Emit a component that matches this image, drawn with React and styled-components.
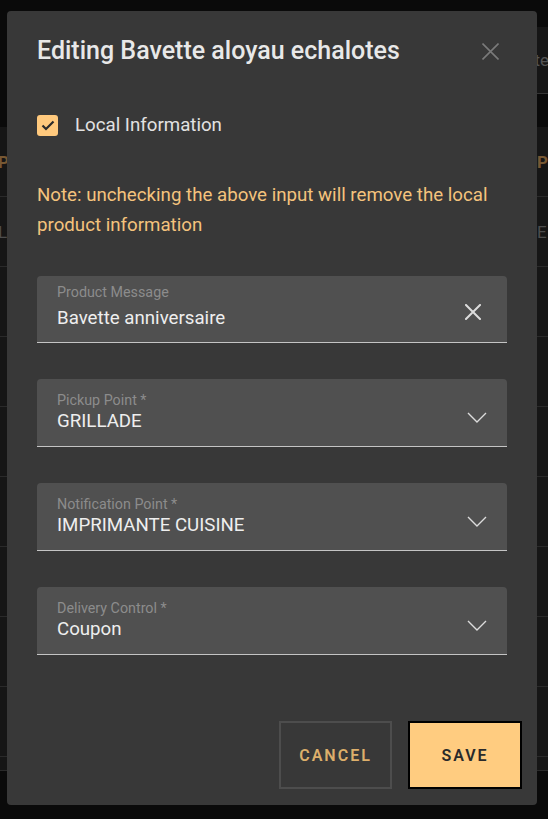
import React from 'react';
import styled, { createGlobalStyle } from 'styled-components';

const GlobalStyle = createGlobalStyle`
  html, body {
    margin: 0;
    padding: 0;
    background: #141414;
    overflow: hidden;
  }
  body {
    font-family: Roboto, 'Liberation Sans', sans-serif;
  }
`;

/* page behind the dialog */

const Page = styled.div`
  width: 548px;
  height: 819px;
  display: flex;
  flex-direction: column;
  overflow: hidden;
`;

const Toolbar = styled.div`
  margin-top: 27px;
  height: 67px;
  display: flex;
  justify-content: flex-end;
`;

const Search = styled.div`
  width: 300px;
  background: #2c2c2c;
  border-bottom: 1px solid #6a6a6a;
  display: flex;
  align-items: center;
  justify-content: flex-end;
  font-size: 17px;
  color: #a8a8a8;
  white-space: nowrap;
  overflow: hidden;
  margin-right: -1px;
`;

const Table = styled.div`
  margin-top: 33px;
  height: 643px;
  overflow: hidden;
  border-bottom: 1px solid #555;
`;

const Row = styled.div`
  height: 70px;
  display: grid;
  grid-template-columns: 537px 1fr;
  align-items: center;
  background: #2c2c2c;
  border-bottom: 1px solid #555;
  box-sizing: border-box;
  font-size: 17px;
  font-weight: ${p => (p.$head ? 700 : 400)};
  color: ${p => (p.$head ? '#eeb066' : '#9a9a9a')};
  white-space: nowrap;
`;

const Cell = styled.span`
  overflow: hidden;
  margin-left: ${p => (p.$first ? '-2px' : '0')};
`;

/* dialog */

const Backdrop = styled.div`
  position: fixed;
  inset: 0;
  background: rgba(0, 0, 0, 0.5);
  display: flex;
  align-items: flex-start;
  padding: 11px 0 0 7px;
`;

const Dialog = styled.div`
  width: 530px;
  height: 794px;
  box-sizing: border-box;
  background: #383838;
  border-radius: 4px;
  padding: 24px 30px 16px 30px;
  display: flex;
  flex-direction: column;
  color: #e6e6e6;
`;

const Header = styled.div`
  display: flex;
  align-items: center;
  justify-content: space-between;
`;

const Title = styled.h2`
  margin: 0;
  font-size: 25px;
  line-height: 32px;
  font-weight: 500;
  color: #e8e8e8;
`;

const IconButton = styled.button`
  border: 0;
  background: none;
  padding: 0;
  margin-right: ${p => p.$mr || 0}px;
  display: flex;
  align-items: center;
  justify-content: center;
  color: ${p => p.$color || '#e0e0e0'};
  cursor: pointer;
`;

const CheckRow = styled.label`
  margin-top: 48px;
  display: flex;
  align-items: center;
  gap: 17px;
  font-size: 18.7px;
  line-height: 21px;
  color: #e2e2e2;
`;

const Box = styled.span`
  width: 21px;
  height: 21px;
  border-radius: 3px;
  background: #ffc97d;
  display: flex;
  align-items: center;
  justify-content: center;
`;

const Note = styled.p`
  margin: 44px 0 0;
  font-size: 18.7px;
  line-height: 30px;
  color: #f4c37d;
`;

const Fields = styled.div`
  margin-top: 36px;
  display: flex;
  flex-direction: column;
  gap: 36px;
`;

const Field = styled.div`
  height: ${p => (p.$select ? '68px' : '67px')};
  box-sizing: border-box;
  background: #505050;
  border-radius: 4px 4px 0 0;
  border-bottom: 1px solid #c4c4c4;
  padding: ${p => (p.$select ? '13px' : '8px')} 20px 0 20px;
  display: flex;
  align-items: flex-start;
  justify-content: space-between;
`;

const FieldText = styled.div`
  display: flex;
  flex-direction: column;
`;

const Label = styled.span`
  font-size: 14.3px;
  line-height: 16px;
  color: #8c8c8c;
  margin-bottom: ${p => (p.$select ? '1px' : '6px')};
`;

const Value = styled.span`
  font-size: 18.7px;
  line-height: 24px;
  color: #eeeeee;
`;

const Adornment = styled.span`
  align-self: center;
  margin-top: ${p => p.$mt || 0}px;
  margin-right: ${p => p.$mr || 0}px;
  display: flex;
  color: #dcdcdc;
`;

const Footer = styled.div`
  margin-top: auto;
  margin-right: -15px;
  display: flex;
  justify-content: flex-end;
  gap: 16px;
`;

const Button = styled.button`
  height: 68px;
  width: ${p => (p.$primary ? '114px' : '113px')};
  box-sizing: border-box;
  border: 2px solid ${p => (p.$primary ? '#000' : '#4d4d4d')};
  background: ${p => (p.$primary ? '#ffcc80' : 'transparent')};
  color: ${p => (p.$primary ? '#2a2a2a' : '#ddaf6b')};
  font-family: Roboto, 'Liberation Sans', sans-serif;
  font-size: 16px;
  font-weight: 600;
  letter-spacing: 2px;
  cursor: pointer;
`;

const CloseIcon = ({ size = 16, stroke = 1.6 }) => (
  <svg width={size} height={size} viewBox="0 0 16 16" fill="none">
    <path d="M1 1L15 15M15 1L1 15" stroke="currentColor" strokeWidth={stroke} strokeLinecap="square" />
  </svg>
);

const Chevron = () => (
  <svg width="20" height="11" viewBox="0 0 20 11" fill="none">
    <path d="M1 1L10 10L19 1" stroke="currentColor" strokeWidth="1.4" />
  </svg>
);

const Check = () => (
  <svg width="14" height="11" viewBox="0 0 14 11" fill="none">
    <path d="M1.5 5.5L5 9L12.5 1.5" stroke="#2b2b2b" strokeWidth="2.2" />
  </svg>
);

const fields = [
  { label: 'Product Message', value: 'Bavette anniversaire', text: true },
  { label: 'Pickup Point *', value: 'GRILLADE' },
  { label: 'Notification Point *', value: 'IMPRIMANTE CUISINE' },
  { label: 'Delivery Control *', value: 'Coupon' },
];

const rows = [
  ['P', 'Po', true],
  ['L', 'E'],
  ['', ''],
  ['', ''],
  ['', ''],
  ['', ''],
  ['', ''],
  ['', ''],
  ['', ''],
  ['', ''],
];

export default function App() {
  return (
    <>
      <GlobalStyle />
      <Page>
        <Toolbar>
          <Search>te</Search>
        </Toolbar>
        <Table>
          {rows.map(([a, b, head], i) => (
            <Row key={i} $head={head}>
              <Cell $first>{a}</Cell>
              <Cell>{b}</Cell>
            </Row>
          ))}
        </Table>
      </Page>

      <Backdrop>
        <Dialog role="dialog">
          <Header>
            <Title>Editing Bavette aloyau echalotes</Title>
            <IconButton $color="#7a7a7a" $mr={8} aria-label="close">
              <CloseIcon size={17} stroke={1.5} />
            </IconButton>
          </Header>

          <CheckRow>
            <Box>
              <Check />
            </Box>
            Local Information
          </CheckRow>

          <Note>
            Note: unchecking the above input will remove the local product information
          </Note>

          <Fields>
            {fields.map(f => (
              <Field key={f.label} $select={!f.text}>
                <FieldText>
                  <Label $select={!f.text}>{f.label}</Label>
                  <Value>{f.value}</Value>
                </FieldText>
                {f.text ? (
                  <Adornment $mt={-2} $mr={6}>
                    <CloseIcon size={16} stroke={2} />
                  </Adornment>
                ) : (
                  <Adornment $mt={-4}>
                    <Chevron />
                  </Adornment>
                )}
              </Field>
            ))}
          </Fields>

          <Footer>
            <Button>CANCEL</Button>
            <Button $primary>SAVE</Button>
          </Footer>
        </Dialog>
      </Backdrop>
    </>
  );
}
